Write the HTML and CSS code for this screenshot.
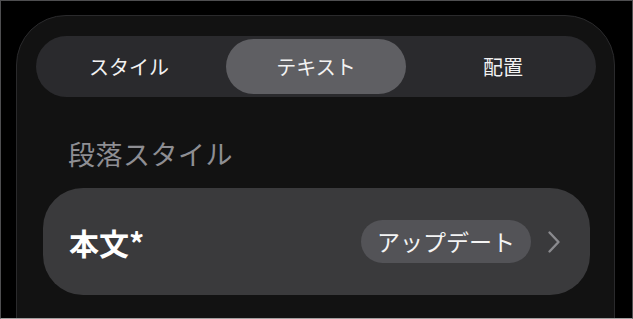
FILE: index.html
```html
<!DOCTYPE html>
<html lang="ja">
<head>
<meta charset="utf-8">
<link rel="stylesheet" href="styles.css">
</head>
<body>
<div class="frame">
  <div class="panel">
    <div class="segmented">
      <div class="seg">スタイル</div>
      <div class="seg active">テキスト</div>
      <div class="seg">配置</div>
    </div>
    <div class="heading">段落スタイル</div>
    <div class="card">
      <div class="title">本文*</div>
      <div class="right">
        <div class="pill">アップデート</div>
        <svg class="chev" width="14" height="24" viewBox="0 0 14 24"><path d="M2.5 2.5 L11.5 12 L2.5 21.5" fill="none" stroke="#8a8a8e" stroke-width="2.4" stroke-linecap="round" stroke-linejoin="round"/></svg>
      </div>
    </div>
  </div>
</div>
</body>
</html>
```
FILE: styles.css
```css
html, body {
  margin: 0;
  padding: 0;
  background: #000;
}
body {
  font-family: "Noto Sans CJK JP", "Noto Sans", sans-serif;
}
.frame {
  box-sizing: border-box;
  width: 633px;
  height: 319px;
  overflow: hidden;
  border: 1px solid #4e4e50;
  border-bottom-color: #a0a0a0;
  background: #000;
  padding: 14px 17px 0 15px;
}
.panel {
  height: 340px;
  box-sizing: border-box;
  background: #121212;
  border: 1px solid #2a2a2c;
  border-radius: 50px 50px 0 0;
  padding: 20px 18px 0 19px;
}
.segmented {
  display: flex;
  gap: 7px;
  height: 61px;
  box-sizing: border-box;
  padding: 3px;
  background: #2a2a2d;
  border-radius: 31px;
}
.seg {
  flex: 1;
  display: flex;
  align-items: center;
  justify-content: center;
  color: #f2f2f2;
  font-size: 20px;
  border-radius: 28px;
}
.seg.active {
  background: #5f5f63;
}
.heading {
  margin: 42px 0 0 32px;
  height: 30px;
  line-height: 30px;
  font-size: 27px;
  letter-spacing: 0.5px;
  color: #8e8e93;
}
.card {
  margin: 19px 6px 0 7px;
  height: 107px;
  box-sizing: border-box;
  background: #3a3a3c;
  border-radius: 40px;
  display: flex;
  align-items: center;
  justify-content: space-between;
  padding: 0 29px 0 26px;
}
.title {
  color: #fff;
  font-size: 30px;
  font-weight: 700;
}
.right {
  display: flex;
  align-items: center;
  gap: 16px;
}
.pill {
  height: 43px;
  line-height: 43px;
  padding: 0 16px;
  border-radius: 22px;
  background: #535357;
  color: #f4f4f4;
  font-size: 23px;
}
.chev {
  display: block;
}
```
